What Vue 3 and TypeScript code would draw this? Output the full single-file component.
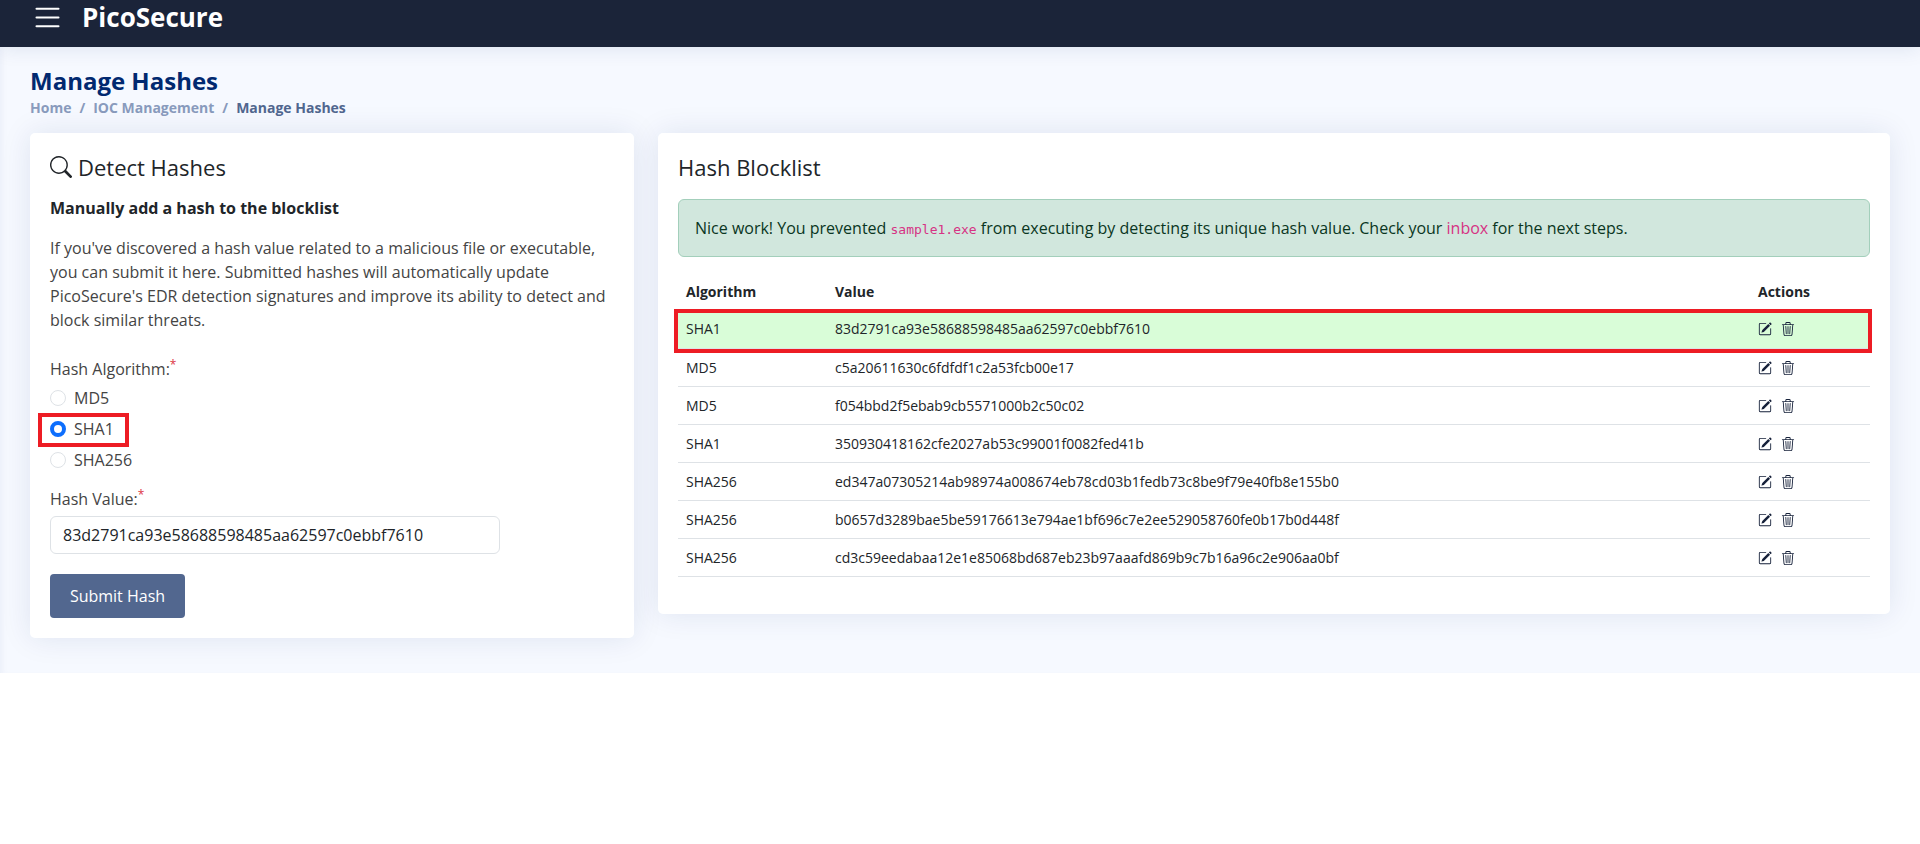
<template>
  <div class="page">
    <header class="topbar">
      <svg class="menu-icon" viewBox="0 0 16 16" fill="currentColor">
        <path fill-rule="evenodd" d="M2.5 12a.5.5 0 0 1 .5-.5h10a.5.5 0 0 1 0 1H3a.5.5 0 0 1-.5-.5zm0-4a.5.5 0 0 1 .5-.5h10a.5.5 0 0 1 0 1H3a.5.5 0 0 1-.5-.5zm0-4a.5.5 0 0 1 .5-.5h10a.5.5 0 0 1 0 1H3a.5.5 0 0 1-.5-.5z" />
      </svg>
      <span class="logo">PicoSecure</span>
    </header>

    <main class="main">
      <h1 class="page-title">Manage Hashes</h1>
      <nav class="breadcrumb">
        <span>Home</span>
        <span class="sep">/</span>
        <span>IOC Management</span>
        <span class="sep">/</span>
        <span class="current">Manage Hashes</span>
      </nav>

      <div class="columns">
        <section class="card detect-card">
          <h2 class="card-title">
            <svg class="search-icon" viewBox="0 0 16 16" fill="currentColor">
              <path d="M11.742 10.344a6.5 6.5 0 1 0-1.397 1.398h-.001c.03.04.062.078.098.115l3.85 3.85a1 1 0 0 0 1.415-1.414l-3.85-3.85a1.007 1.007 0 0 0-.115-.1zM12 6.5a5.5 5.5 0 1 1-11 0 5.5 5.5 0 0 1 11 0z" />
            </svg>
            Detect Hashes
          </h2>
          <p class="lead">Manually add a hash to the blocklist</p>
          <p class="intro">
            If you've discovered a hash value related to a malicious file or executable, you can submit it here.
            Submitted hashes will automatically update PicoSecure's EDR detection signatures and improve its ability
            to detect and block similar threats.
          </p>

          <div class="field-label">Hash Algorithm:<sup class="req">*</sup></div>
          <div class="radios">
            <label v-for="algo in algorithms" :key="algo" class="radio-row">
              <span class="radio" :class="{ checked: algo === selected }"></span>
              <span>{{ algo }}</span>
              <span v-if="algo === selected" class="mark radio-mark"></span>
            </label>
          </div>

          <div class="field-label value-label">Hash Value:<sup class="req">*</sup></div>
          <div class="input">83d2791ca93e58688598485aa62597c0ebbf7610</div>
          <button class="submit" type="button">Submit Hash</button>
        </section>

        <section class="card list-card">
          <h2 class="card-title">Hash Blocklist</h2>
          <div class="alert">
            Nice work! You prevented <code>sample1.exe</code> from executing by detecting its unique hash value. Check
            your <a class="link">inbox</a> for the next steps.
          </div>

          <table class="hash-table">
            <thead>
              <tr>
                <th class="col-algo">Algorithm</th>
                <th>Value</th>
                <th class="col-actions">Actions</th>
              </tr>
            </thead>
            <tbody>
              <tr v-for="(row, i) in hashes" :key="row.value" :class="{ highlight: i === 0 }">
                <td>{{ row.algo }}</td>
                <td>{{ row.value }}</td>
                <td class="actions">
                  <svg class="act-icon" viewBox="0 0 16 16" fill="currentColor">
                    <path d="M15.502 1.94a.5.5 0 0 1 0 .706L14.459 3.69l-2-2L13.502.646a.5.5 0 0 1 .707 0l1.293 1.293zm-1.75 2.456-2-2L4.939 9.21a.5.5 0 0 0-.121.196l-.805 2.414a.25.25 0 0 0 .316.316l2.414-.805a.5.5 0 0 0 .196-.12l6.813-6.814z" />
                    <path fill-rule="evenodd" d="M1 13.5A1.5 1.5 0 0 0 2.5 15h11a1.5 1.5 0 0 0 1.5-1.5v-6a.5.5 0 0 0-1 0v6a.5.5 0 0 1-.5.5h-11a.5.5 0 0 1-.5-.5v-11a.5.5 0 0 1 .5-.5H9a.5.5 0 0 0 0-1H2.5A1.5 1.5 0 0 0 1 2.5v11z" />
                  </svg>
                  <svg class="act-icon" viewBox="0 0 16 16" fill="currentColor">
                    <path d="M6.5 1h3a.5.5 0 0 1 .5.5v1H6v-1a.5.5 0 0 1 .5-.5ZM11 2.5v-1A1.5 1.5 0 0 0 9.5 0h-3A1.5 1.5 0 0 0 5 1.5v1H2.506a.58.58 0 0 0-.01 0H1.5a.5.5 0 0 0 0 1h.538l.853 10.66A2 2 0 0 0 4.885 16h6.23a2 2 0 0 0 1.994-1.84l.853-10.66h.538a.5.5 0 0 0 0-1h-.995a.59.59 0 0 0-.01 0H11Zm1.958 1-.846 10.58a1 1 0 0 1-.997.92h-6.23a1 1 0 0 1-.997-.92L3.042 3.5h9.916Zm-7.487 1a.5.5 0 0 1 .528.47l.5 8.5a.5.5 0 0 1-.998.06L5 5.03a.5.5 0 0 1 .47-.53Zm5.058 0a.5.5 0 0 1 .47.53l-.5 8.5a.5.5 0 1 1-.998-.06l.5-8.5a.5.5 0 0 1 .528-.47ZM8 4.5a.5.5 0 0 1 .5.5v8.5a.5.5 0 0 1-1 0V5a.5.5 0 0 1 .5-.5Z" />
                  </svg>
                  <span v-if="i === 0" class="mark row-mark"></span>
                </td>
              </tr>
            </tbody>
          </table>
        </section>
      </div>
    </main>
  </div>
</template>

<script setup lang="ts">
interface HashRow {
  algo: string
  value: string
}

const algorithms = ['MD5', 'SHA1', 'SHA256']
const selected = 'SHA1'

const hashes: HashRow[] = [
  { algo: 'SHA1', value: '83d2791ca93e58688598485aa62597c0ebbf7610' },
  { algo: 'MD5', value: 'c5a20611630c6fdfdf1c2a53fcb00e17' },
  { algo: 'MD5', value: 'f054bbd2f5ebab9cb5571000b2c50c02' },
  { algo: 'SHA1', value: '350930418162cfe2027ab53c99001f0082fed41b' },
  { algo: 'SHA256', value: 'ed347a07305214ab98974a008674eb78cd03b1fedb73c8be9f79e40fb8e155b0' },
  { algo: 'SHA256', value: 'b0657d3289bae5be59176613e794ae1bf696c7e2ee529058760fe0b17b0d448f' },
  { algo: 'SHA256', value: 'cd3c59eedabaa12e1e85068bd687eb23b97aaafd869b9c7b16a96c2e906aa0bf' },
]
</script>

<style>
body {
  background: #fff;
}
</style>

<style scoped>
.page {
  font-family: 'Open Sans', sans-serif;
  color: #444;
}

.topbar {
  height: 47px;
  background: #1b2439;
  display: flex;
  align-items: flex-start;
  padding-left: 30px;
  gap: 17px;
  color: #fff;
  position: relative;
  box-shadow: 0 2px 20px rgba(1, 41, 112, 0.1);
}

.menu-icon {
  width: 35px;
  height: 35px;
}

.logo {
  font-size: 26px;
  font-weight: 700;
  line-height: 35px;
}

.main {
  background: #f6f9ff;
  padding: 19px 30px 35px;
  box-shadow: inset 6px 0 6px -4px rgba(1, 41, 112, 0.05);
}

.page-title {
  margin: 0;
  font-size: 24px;
  font-weight: 700;
  line-height: 30px;
  color: #012970;
}

.breadcrumb {
  display: flex;
  gap: 8px;
  margin-top: 1px;
  font-size: 14px;
  line-height: 21px;
  font-weight: 700;
  color: #899bbd;
}

.breadcrumb .current {
  color: #51678f;
}

.columns {
  display: grid;
  grid-template-columns: 604px 1232px;
  gap: 24px;
  align-items: start;
  margin-top: 15px;
}

.card {
  background: #fff;
  border-radius: 5px;
  padding: 20px;
  box-shadow: 0 0 30px rgba(1, 41, 112, 0.1);
}

.card-title {
  margin: 0;
  display: flex;
  align-items: center;
  gap: 6px;
  font-size: 22px;
  font-weight: 400;
  line-height: 28px;
  color: #212529;
}

.search-icon {
  width: 22px;
  height: 22px;
}

.lead {
  margin: 15px 0 0;
  font-size: 16px;
  font-weight: 700;
  line-height: 24px;
  color: #212529;
}

.intro {
  margin: 16px 0 0;
  font-size: 16px;
  line-height: 24px;
}

.field-label {
  margin-top: 25px;
  font-size: 16px;
  line-height: 24px;
}

.value-label {
  margin-top: 15px;
}

.req {
  color: #dc3545;
  font-size: 12px;
  line-height: 0;
}

.radios {
  margin-top: 5px;
  display: flex;
  flex-direction: column;
  gap: 7px;
}

.radio-row {
  position: relative;
  display: flex;
  align-items: center;
  gap: 8px;
  font-size: 16px;
  line-height: 24px;
}

.radio {
  width: 16px;
  height: 16px;
  box-sizing: border-box;
  border: 1px solid #dee2e6;
  border-radius: 50%;
  background: #fff;
}

.radio.checked {
  border: 4px solid #0d6efd;
}

.mark {
  position: absolute;
  border: 4px solid #ed1c24;
  box-sizing: border-box;
}

.radio-mark {
  left: -12px;
  top: -4px;
  width: 91px;
  height: 34px;
}

.input {
  margin-top: 5px;
  width: 450px;
  height: 38px;
  box-sizing: border-box;
  border: 1px solid #dee2e6;
  border-radius: 6px;
  padding: 0 12px;
  font-size: 16px;
  line-height: 36px;
  color: #212529;
}

.submit {
  display: block;
  margin-top: 20px;
  width: 135px;
  height: 44px;
  border: 0;
  border-radius: 4px;
  background: #52678f;
  color: #fff;
  font-family: inherit;
  font-size: 16px;
}

.list-card {
  padding-bottom: 37px;
}

.alert {
  margin-top: 18px;
  height: 58px;
  box-sizing: border-box;
  border: 1px solid #a3cfbb;
  border-radius: 6px;
  background: #d1e7dd;
  padding: 16px;
  font-size: 16px;
  line-height: 24px;
  color: #0a3622;
}

code {
  font-family: 'DejaVu Sans Mono', monospace;
  font-size: 13px;
  color: #d63384;
}

.link {
  color: #d63384;
}

.hash-table {
  margin-top: 15px;
  width: 100%;
  border-collapse: collapse;
  font-size: 14px;
  color: #212529;
}

.hash-table th,
.hash-table td {
  height: 38px;
  padding: 0 8px;
  text-align: left;
  box-sizing: border-box;
}

.hash-table th {
  font-weight: 700;
}

.hash-table td {
  border-bottom: 1px solid #dee2e6;
}

.col-algo {
  width: 149px;
}

.col-actions {
  width: 120px;
}

.highlight td {
  background: #d9fdd8;
}

.actions {
  position: relative;
}

.act-icon {
  width: 14px;
  height: 14px;
  vertical-align: -2px;
  margin-right: 9px;
  color: #16213a;
}

.row-mark {
  left: -1076px;
  top: -1px;
  width: 1198px;
  height: 44px;
}
</style>
